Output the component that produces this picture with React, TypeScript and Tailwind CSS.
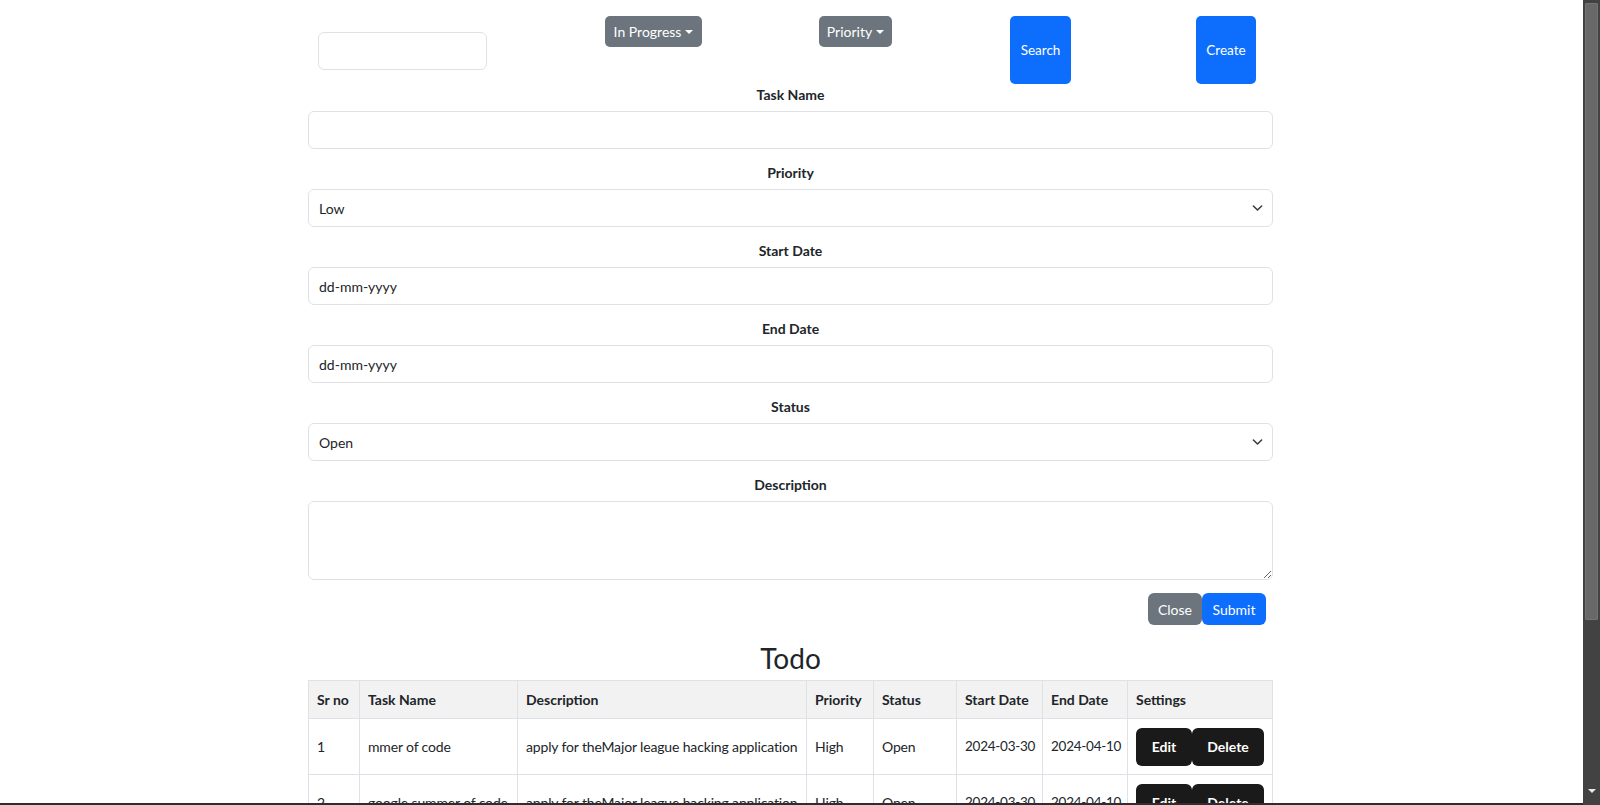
import { useState } from "react";

type Task = {
  id: number;
  name: string;
  desc: string;
  priority: string;
  status: string;
  start: string;
  end: string;
};

const tasks: Task[] = [
  {
    id: 1,
    name: "mmer of code",
    desc: "apply for theMajor league hacking application",
    priority: "High",
    status: "Open",
    start: "2024-03-30",
    end: "2024-04-10",
  },
  {
    id: 2,
    name: "google summer of code",
    desc: "apply for theMajor league hacking application",
    priority: "High",
    status: "Open",
    start: "2024-03-30",
    end: "2024-04-10",
  },
];

const inputCls =
  "block w-full h-[38px] rounded-[6px] border border-[#dee2e6] bg-white px-[10px] text-[14px] text-[#212529] outline-none";

const cell = "border border-[#dee2e6] px-[8px] whitespace-nowrap";

function Caret() {
  return (
    <span className="ml-[4px] inline-block h-0 w-0 border-x-[4px] border-t-[4.5px] border-x-transparent border-t-white align-[2px]" />
  );
}

function Field({ label, children }: { label: string; children: React.ReactNode }) {
  return (
    <div className="mb-[13px]">
      <div className="mb-[6px] text-center text-[14px] font-bold leading-[21px]">{label}</div>
      {children}
    </div>
  );
}

function Select({ value, options }: { value: string; options: string[] }) {
  const [v, setV] = useState(value);
  return (
    <div className="relative">
      <select
        value={v}
        onChange={(e) => setV(e.target.value)}
        className={`${inputCls} appearance-none`}
      >
        {options.map((o) => (
          <option key={o}>{o}</option>
        ))}
      </select>
      <svg
        viewBox="0 0 16 16"
        className="pointer-events-none absolute right-[10px] top-1/2 h-[11px] w-[11px] -translate-y-1/2"
        fill="none"
        stroke="#343a40"
        strokeWidth="2.2"
        strokeLinecap="round"
        strokeLinejoin="round"
      >
        <path d="M2 5l6 6 6-6" />
      </svg>
    </div>
  );
}

function Scrollbar() {
  return (
    <div className="flex h-full w-[17px] shrink-0 flex-col bg-[#424242] px-[2px] pt-[3px]">
      <div className="h-[617px] rounded-[1px] border border-[#747474] bg-[#686868]" />
      <div className="flex-1" />
      <div className="flex h-[16px] items-start justify-center">
        <span className="h-0 w-0 border-x-[4px] border-t-[4px] border-x-transparent border-t-[#e8e8e8]" />
      </div>
    </div>
  );
}

export default function App() {
  return (
    <div className="flex h-screen w-full overflow-hidden bg-white font-['Lato',sans-serif] text-[#212529]">
      <div className="flex min-w-0 flex-1 flex-col">
        <div className="flex-1 overflow-hidden">
          <div className="ml-[308px] w-[965px]">
            {/* filter bar */}
            <div className="flex items-start pt-[16px]">
              <input className="ml-[10px] mt-[16px] h-[38px] w-[169px] rounded-[6px] border border-[#dee2e6] px-[10px] text-[14px] outline-none" />
              <button className="ml-[118px] flex h-[31px] w-[97px] items-center justify-center rounded-[5px] bg-[#6c757d] text-[14px] text-white">
                In Progress
                <Caret />
              </button>
              <button className="ml-[117px] flex h-[31px] w-[73px] items-center justify-center rounded-[5px] bg-[#6c757d] text-[14px] text-white">
                Priority
                <Caret />
              </button>
              <button className="ml-[118px] h-[68px] w-[61px] rounded-[5px] bg-[#0d6efd] text-[13.5px] text-white">
                Search
              </button>
              <button className="ml-[125px] h-[68px] w-[60px] rounded-[5px] bg-[#0d6efd] text-[13.5px] text-white">
                Create
              </button>
            </div>

            {/* form */}
            <Field label="Task Name">
              <input className={inputCls} />
            </Field>
            <Field label="Priority">
              <Select value="Low" options={["Low", "Medium", "High"]} />
            </Field>
            <Field label="Start Date">
              <input className={inputCls} defaultValue="dd-mm-yyyy" />
            </Field>
            <Field label="End Date">
              <input className={inputCls} defaultValue="dd-mm-yyyy" />
            </Field>
            <Field label="Status">
              <Select value="Open" options={["Open", "In Progress", "Done"]} />
            </Field>
            <Field label="Description">
              <textarea className="block h-[79px] w-full rounded-[6px] border border-[#dee2e6] px-[10px] py-[6px] text-[14px] outline-none" />
            </Field>
            <div className="mr-[7px] flex justify-end">
              <button className="h-[32px] w-[54px] rounded-[6px] bg-[#6c757d] text-[14px] text-white">Close</button>
              <button className="h-[32px] w-[64px] rounded-[6px] bg-[#0d6efd] text-[14px] text-white">Submit</button>
            </div>

            <h3 className="mt-[16px] mb-[5px] text-center text-[28px] leading-[34px]">Todo</h3>

            <table className="w-full table-fixed border-collapse text-[14px] tracking-[-0.15px]">
              <colgroup>
                <col className="w-[51px]" />
                <col className="w-[158px]" />
                <col className="w-[289px]" />
                <col className="w-[67px]" />
                <col className="w-[83px]" />
                <col className="w-[86px]" />
                <col className="w-[85px]" />
                <col />
              </colgroup>
              <thead>
                <tr className="h-[38px] bg-[#f2f2f2] text-left">
                  {["Sr no", "Task Name", "Description", "Priority", "Status", "Start Date", "End Date", "Settings"].map(
                    (h) => (
                      <th key={h} className={`${cell} font-bold tracking-normal`}>
                        {h}
                      </th>
                    )
                  )}
                </tr>
              </thead>
              <tbody>
                {tasks.map((t) => (
                  <tr key={t.id} className="h-[56px]">
                    <td className={cell}>{t.id}</td>
                    <td className={cell}>{t.name}</td>
                    <td className={cell}>{t.desc}</td>
                    <td className={cell}>{t.priority}</td>
                    <td className={cell}>{t.status}</td>
                    <td className={`${cell} text-[13.5px] tracking-[-0.25px]`}>{t.start}</td>
                    <td className={`${cell} text-[13.5px] tracking-[-0.25px]`}>{t.end}</td>
                    <td className={cell}>
                      <div className="flex">
                        <button className="h-[38px] w-[56px] rounded-[6px] bg-[#1a1a1a] text-[14px] font-bold tracking-normal text-white">
                          Edit
                        </button>
                        <button className="h-[38px] w-[72px] rounded-[6px] bg-[#1a1a1a] text-[14px] font-bold tracking-normal text-white">
                          Delete
                        </button>
                      </div>
                    </td>
                  </tr>
                ))}
              </tbody>
            </table>
          </div>
        </div>
        <div className="h-[2px] bg-[#2e2e2e]" />
      </div>
      <Scrollbar />
    </div>
  );
}
